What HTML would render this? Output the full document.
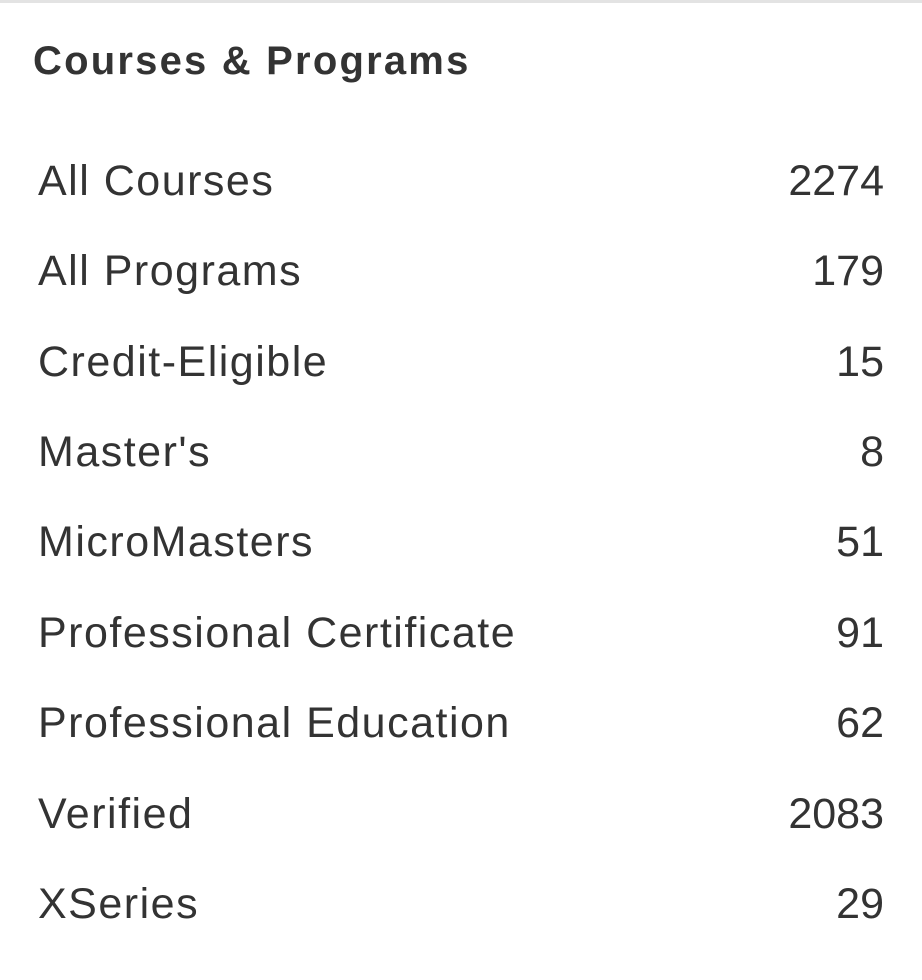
<!DOCTYPE html>
<html><head><style>
html,body{margin:0;padding:0;background:#fff;width:922px;height:980px;overflow:hidden}
.top{position:absolute;left:0;top:0;width:922px;height:3px;background:#e3e3e3}
h2{position:absolute;left:33px;top:41px;margin:0;font:bold 40px/1 "Liberation Sans",sans-serif;color:#333;letter-spacing:2.2px}
.row{position:absolute;left:38px;width:846px;font:43px/1 "Liberation Sans",sans-serif;color:#333;letter-spacing:1.5px}
.row span{position:absolute;right:0;top:0;letter-spacing:0}
</style></head><body>
<div class="top"></div>
<h2>Courses &amp; Programs</h2>
<div class="row" style="top:160px">All Courses<span>2274</span></div>
<div class="row" style="top:250px">All Programs<span>179</span></div>
<div class="row" style="top:341px">Credit-Eligible<span>15</span></div>
<div class="row" style="top:431px">Master's<span>8</span></div>
<div class="row" style="top:521px">MicroMasters<span>51</span></div>
<div class="row" style="top:612px">Professional Certificate<span>91</span></div>
<div class="row" style="top:702px">Professional Education<span>62</span></div>
<div class="row" style="top:793px">Verified<span>2083</span></div>
<div class="row" style="top:883px">XSeries<span>29</span></div>
</body></html>
